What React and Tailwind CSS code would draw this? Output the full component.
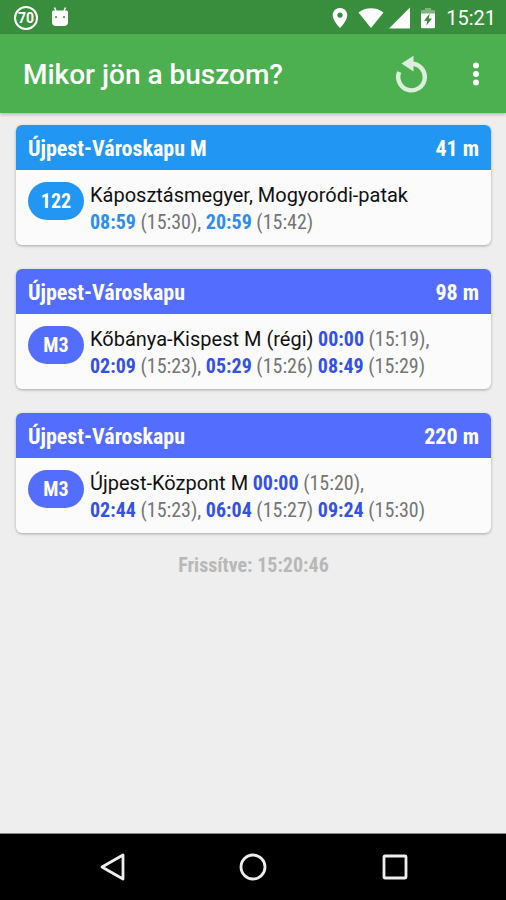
const stops = [
  {
    id: 1,
    name: "Újpest-Városkapu M",
    distance: "41 m",
    line: "122",
    headsign: "Káposztásmegyer, Mogyoródi-patak",
    theme: "blue",
    first: [],
    rest: [
      { left: "08:59", at: "(15:30)", comma: true },
      { left: "20:59", at: "(15:42)" },
    ],
  },
  {
    id: 2,
    name: "Újpest-Városkapu",
    distance: "98 m",
    line: "M3",
    headsign: "Kőbánya-Kispest M (régi)",
    theme: "indigo",
    first: [{ left: "00:00", at: "(15:19)", comma: true }],
    rest: [
      { left: "02:09", at: "(15:23)", comma: true },
      { left: "05:29", at: "(15:26)" },
      { left: "08:49", at: "(15:29)" },
    ],
  },
  {
    id: 3,
    name: "Újpest-Városkapu",
    distance: "220 m",
    line: "M3",
    headsign: "Újpest-Központ M",
    theme: "indigo",
    first: [{ left: "00:00", at: "(15:20)", comma: true }],
    rest: [
      { left: "02:44", at: "(15:23)", comma: true },
      { left: "06:04", at: "(15:27)" },
      { left: "09:24", at: "(15:30)" },
    ],
  },
];

const themes = {
  blue: { bg: "bg-[#2196f3]", text: "text-[#2b8ef0]" },
  indigo: { bg: "bg-[#536dfe]", text: "text-[#3450e8]" },
};

function App() {
  return (
    <div className="flex min-h-screen flex-col bg-[#eeeeee] font-['Roboto_Condensed','Roboto',sans-serif]">
      <StatusBar />
      <Toolbar />
      <main className="flex flex-1 flex-col gap-6 pt-3 pr-[15px] pl-4">
        {stops.map((stop) => (
          <StopCard key={stop.id} stop={stop} />
        ))}
        <p className="-mt-1.5 text-center text-xl leading-7 font-bold text-[#b8b8b8]">
          Frissítve: 15:20:46
        </p>
      </main>
      <NavBar />
    </div>
  );
}

export default App;

const StatusBar = () => (
  <div className="flex h-[34px] items-center justify-between bg-[#388e3c] pt-0.5 pr-2.5 pl-3.5 font-['Roboto',sans-serif] text-white">
    <div className="flex items-center gap-3">
      {/* Battery percentage */}
      <span className="flex size-6 items-center justify-center rounded-full border-2 border-white text-sm leading-none font-bold">
        70
      </span>
      {/* Android head */}
      <svg width="20" height="22" viewBox="0 0 20 22" fill="currentColor">
        <path d="M4.500 .5 6 4M15.500 .5 14 4" stroke="currentColor" strokeWidth="1.500" />
        <path
          fillRule="evenodd"
          d="M3.500 3.500h13a1.500 1.500 0 0 1 1.500 1.500V15a4 4 0 0 1-4 4H6a4 4 0 0 1-4-4V5a1.500 1.500 0 0 1 1.500-1.500zM6 9a1 1 0 1 0 0 2 1 1 0 0 0 0-2zM14 9a1 1 0 1 0 0 2 1 1 0 0 0 0-2z"
        />
      </svg>
    </div>

    <div className="flex items-center">
      <svg className="mr-2.5" width="16" height="22" viewBox="0 0 16 22" fill="currentColor">
        <path
          fillRule="evenodd"
          d="M8 1C3.900 1 .7 4.200.7 8.200.7 13.500 8 21 8 21s7.300-7.500 7.300-12.800C15.300 4.200 12.100 1 8 1zM8 5.500a2.600 2.600 0 1 1 0 5.200 2.600 2.600 0 0 1 0-5.200z"
        />
      </svg>
      <svg className="mr-1" width="26" height="22" viewBox="0 0 26 22" fill="currentColor">
        <path d="M13 21 .5 5.500C4 2.700 8.300 1.200 13 1.200s9 1.500 12.500 4.300z" />
      </svg>
      <svg className="mr-2.5" width="22" height="22" viewBox="0 0 22 22" fill="currentColor">
        <path d="M22 .5V21.500H1z" />
      </svg>
      <svg className="mr-2.5" width="16" height="22" viewBox="0 0 16 22" fill="currentColor">
        <path d="M5 1h6v2h3a1 1 0 0 1 1 1v3H1V4a1 1 0 0 1 1-1h3z" opacity="0.35" />
        <path
          fillRule="evenodd"
          d="M1 6.500h14V20a1.200 1.200 0 0 1-1.200 1.200H2.200A1.200 1.200 0 0 1 1 20zM9.700 6.500 4 13.800h3.300L6.300 18.800 12 11.600H8.700z"
        />
      </svg>
      <span className="text-xl leading-6">15:21</span>
    </div>
  </div>
);

const Toolbar = () => (
  <header className="flex h-[79px] items-center bg-[#4caf50] pt-0.5 pr-4 pl-[23px] text-white shadow-[0_2px_3px_rgba(0,0,0,0.2)]">
    <h1 className="flex-1 font-['Roboto',sans-serif] text-[28px] leading-8 font-medium">
      Mikor jön a buszom?
    </h1>
    <button type="button" aria-label="Frissítés" className="mr-8 text-[#dbefdc]">
      <svg width="34" height="40" viewBox="0 0 34 40" fill="none">
        <path
          d="M3.200 17A13.300 13.300 0 1 0 15.500 8.700"
          stroke="currentColor"
          strokeWidth="4.400"
        />
        <path d="M5.500 8.500 17.500 .8V16.500z" fill="currentColor" />
      </svg>
    </button>
    <button type="button" aria-label="Menü" className="flex w-7 justify-center">
      <svg width="8" height="26" viewBox="0 0 8 26" fill="currentColor">
        <circle cx="4" cy="3.500" r="3" />
        <circle cx="4" cy="12" r="3" />
        <circle cx="4" cy="20.500" r="3" />
      </svg>
    </button>
  </header>
);

const StopCard = ({ stop }) => {
  const theme = themes[stop.theme];

  return (
    <section className="overflow-hidden rounded-md bg-[#fbfbfb] shadow-[0_1px_3px_rgba(0,0,0,0.3)]">
      <div
        className={`flex items-center justify-between px-3 pt-2.5 pb-[7px] text-[22px] leading-7 font-bold text-white ${theme.bg}`}
      >
        <h2>{stop.name}</h2>
        <span>{stop.distance}</span>
      </div>

      <div className="flex items-start gap-1.5 px-3 pt-3 pb-[9px] text-xl leading-[27px]">
        <span
          className={`flex h-[38px] w-14 shrink-0 items-center justify-center rounded-full font-bold text-white ${theme.bg}`}
        >
          {stop.line}
        </span>
        <div className="whitespace-nowrap">
          <p>
            <span className="font-['Roboto',sans-serif] text-[#111111]">{stop.headsign}</span>{" "}
            <Departures items={stop.first} color={theme.text} />
          </p>
          <p>
            <Departures items={stop.rest} color={theme.text} />
          </p>
        </div>
      </div>
    </section>
  );
};

const Departures = ({ items, color }) =>
  items.map((item) => (
    <span key={item.left} className="text-[#757575]">
      <b className={`font-bold ${color}`}>{item.left}</b> {item.at}
      {item.comma && ","}{" "}
    </span>
  ));

// Android navigation buttons
const NavBar = () => (
  <nav className="flex h-[67px] items-center justify-around border-t border-[#888888] bg-black px-10 text-[#eeeeee]">
    <button type="button" aria-label="Vissza">
      <svg width="28" height="30" viewBox="0 0 28 30" fill="none">
        <path d="M26 3v24L5 15z" stroke="currentColor" strokeWidth="2.800" strokeLinejoin="round" />
      </svg>
    </button>
    <button type="button" aria-label="Kezdőképernyő">
      <svg width="28" height="28" viewBox="0 0 28 28" fill="none">
        <circle cx="14" cy="14" r="12" stroke="currentColor" strokeWidth="2.800" />
      </svg>
    </button>
    <button type="button" aria-label="Áttekintés">
      <svg width="28" height="28" viewBox="0 0 28 28" fill="none">
        <rect x="3" y="3" width="22" height="22" rx="1" stroke="currentColor" strokeWidth="2.800" />
      </svg>
    </button>
  </nav>
);
